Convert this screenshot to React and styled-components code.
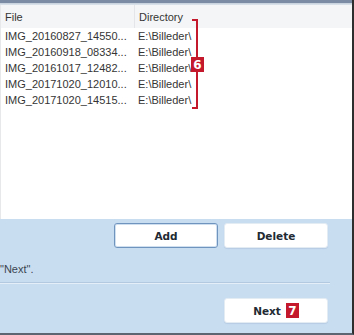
import styled, { createGlobalStyle } from 'styled-components';

const Global = createGlobalStyle`
  html, body { margin: 0; padding: 0; background: #ffffff; }
  body { font-family: "Liberation Sans", Arial, sans-serif; }
`;

const Window = styled.div`
  width: 354px;
  height: 335px;
  box-sizing: border-box;
  display: flex;
  flex-direction: column;
  border-right: 2px solid #2e2e2e;
  border-bottom: 2px solid #5b6470;
  overflow: hidden;
`;

const TopStrip = styled.div`
  height: 5px;
  flex: none;
  background: linear-gradient(#7b8ba3 0, #7b8ba3 3px, #c3cedb 3px, #dde4ec 5px);
`;

const List = styled.div`
  position: relative;
  height: 214px;
  flex: none;
  background: #ffffff;
  border-left: 1px solid #e6e8ea;
`;

const Row = styled.div`
  display: grid;
  grid-template-columns: 133px 1fr;
  height: ${p => (p.$head ? '23px' : '16px')};
  align-items: center;
  background: ${p => (p.$head ? '#f4f5f6' : 'transparent')};
  font-size: 11px;
  color: #353535;
`;

const Cell = styled.div`
  padding-left: 4px;
  white-space: nowrap;
  overflow: hidden;
  height: 100%;
  display: flex;
  align-items: center;
  border-left: ${p => (p.$sep ? '1px solid #e3e5e8' : 'none')};
`;

const Bracket = styled.div`
  position: absolute;
  left: 191px;
  top: 14px;
  width: 4px;
  height: 86px;
  border: 2px solid #c4182c;
  border-left: none;
`;

const Badge = styled.span`
  display: inline-flex;
  align-items: center;
  justify-content: center;
  width: 13px;
  height: 15px;
  background: #c4182c;
  color: #ffffff;
  font-family: "DejaVu Sans", sans-serif;
  font-weight: bold;
  font-size: 12px;
`;

const BracketBadge = styled(Badge)`
  position: absolute;
  left: 190px;
  top: 52px;
`;

const Panel = styled.div`
  flex: 1;
  background: #c9ddf1;
  display: flex;
  flex-direction: column;
`;

const ButtonRow = styled.div`
  display: flex;
  justify-content: flex-end;
  gap: 6px;
  padding: ${p => p.$pad};
`;

const Button = styled.button`
  width: 104px;
  height: 25px;
  background: #ffffff;
  border: 1px solid ${p => (p.$focus ? '#6f95bf' : '#e3ebf3')};
  border-radius: 3px;
  box-shadow: ${p => (p.$focus ? 'inset 0 0 0 1px #cfdff0' : '0 1px 1px #b7cde3')};
  font-family: "DejaVu Sans", sans-serif;
  font-weight: bold;
  font-size: 10.5px;
  color: #222a33;
  display: flex;
  align-items: center;
  justify-content: center;
  gap: 5px;
  padding: 0;
`;

const Hint = styled.div`
  font-size: 11px;
  color: #3c4650;
  padding: 15px 0 0 0;
  height: 19px;
`;

const Separator = styled.div`
  height: 2px;
  margin-right: 22px;
  background: linear-gradient(#b3c9df 0, #b3c9df 1px, #e4eef8 1px);
`;

const files = [
  'IMG_20160827_14550...',
  'IMG_20160918_08334...',
  'IMG_20161017_12482...',
  'IMG_20171020_12010...',
  'IMG_20171020_14515...',
];

export default function App() {
  return (
    <Window>
      <Global />
      <TopStrip />
      <List>
        <Row $head>
          <Cell>File</Cell>
          <Cell $sep>Directory</Cell>
        </Row>
        {files.map(f => (
          <Row key={f}>
            <Cell>{f}</Cell>
            <Cell>E:\Billeder\</Cell>
          </Row>
        ))}
        <Bracket />
        <BracketBadge>6</BracketBadge>
      </List>
      <Panel>
        <ButtonRow $pad="4px 24px 0 0">
          <Button $focus>Add</Button>
          <Button>Delete</Button>
        </ButtonRow>
        <Hint>"Next".</Hint>
        <Separator />
        <ButtonRow $pad="14px 24px 0 0">
          <Button>
            Next <Badge>7</Badge>
          </Button>
        </ButtonRow>
      </Panel>
    </Window>
  );
}
